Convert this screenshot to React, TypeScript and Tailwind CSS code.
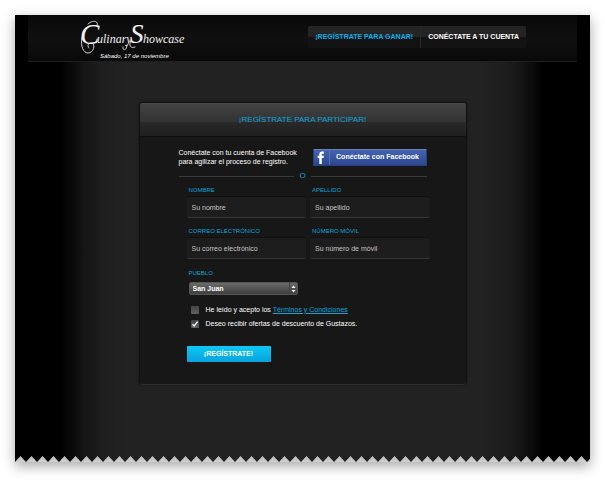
import React from 'react';

type FieldProps = { id: string; label: string; placeholder: string; type?: string };

function Field({ id, label, placeholder, type = 'text' }: FieldProps) {
  return (
    <div className="flex min-w-0 flex-col">
      <label htmlFor={id} className="pl-[2px] text-[6px] leading-[11px] text-[#0ba5da]">
        {label}
      </label>
      <input
        id={id}
        type={type}
        placeholder={placeholder}
        className="h-[22px] w-full rounded-[2px] border-t border-b border-t-[#101010] border-b-[#353535] bg-[#1d1d1d] px-[5px] text-[7px] text-[#ccc] outline-none placeholder:text-[#c4c4c4] placeholder:opacity-100"
      />
    </div>
  );
}

type CheckProps = { id: string; checked?: boolean; children: React.ReactNode };

function Check({ id, checked = false, children }: CheckProps) {
  return (
    <div className="flex h-[14px] items-center gap-[7px] text-[7px] text-white">
      <span className="grid h-[8px] w-[8px] shrink-0">
        <input
          id={id}
          type="checkbox"
          defaultChecked={checked}
          className="peer col-start-1 row-start-1 h-[8px] w-[8px] appearance-none rounded-[1px] bg-linear-to-b from-[#434343] to-[#626262]"
        />
        <svg
          viewBox="0 0 8 8"
          className="pointer-events-none invisible col-start-1 row-start-1 h-[8px] w-[8px] peer-checked:visible"
          aria-hidden="true"
        >
          <path d="M1.5 4.2 3.2 6 6.6 1.6" fill="none" stroke="#fff" strokeWidth="1.3" />
        </svg>
      </span>
      <label htmlFor={id}>{children}</label>
    </div>
  );
}

function Logo() {
  return (
    <div className="flex w-[108px] flex-col text-white">
      <svg
        viewBox="0 0 108 36"
        className="block h-[36px] w-[108px] font-['Liberation_Serif',serif] italic"
        fill="#f2f2f2"
        role="img"
        aria-label="Culinary Showcase"
      >
        <text x="0" y="25" fontSize="29">C</text>
        <text x="17" y="24" fontSize="12">ulinary</text>
        <text x="50" y="24" fontSize="27">S</text>
        <text x="63" y="24" fontSize="12">howcase</text>
        <g fill="none" stroke="#e8e8e8" strokeWidth="0.9" strokeLinecap="round">
          <path d="M2 18C0 28 4 34 8 34c6 0 8-10 3-10-3 0-4 3-2 5" />
          <path d="M17 7c2-6-5-6-9-2" />
          <path d="M51 22c-3 4 0 8 4 6" />
          <path d="M47 26c0 6-5 6-4 2" />
        </g>
      </svg>
      <p className="-mt-[3px] pl-[20px] text-[6px] leading-[9px] whitespace-nowrap italic">Sábado, 17 de noviembre</p>
    </div>
  );
}

function TornEdge() {
  return (
    <svg className="block h-[6px] w-full" aria-hidden="true">
      <defs>
        <linearGradient id="toothFill" x1="0" y1="0" x2="0" y2="1">
          <stop offset="0" stopColor="#bdbdbd" />
          <stop offset="1" stopColor="#cfcfcf" />
        </linearGradient>
        <pattern id="teeth" width="11" height="6" patternUnits="userSpaceOnUse">
          <path d="M0 6 5.5 0 11 6Z" fill="url(#toothFill)" />
        </pattern>
      </defs>
      <rect width="100%" height="6" fill="url(#teeth)" />
    </svg>
  );
}

export default function App() {
  return (
    <div className="overflow-hidden bg-white p-[15px] pb-[19px] font-['Liberation_Sans',Arial,sans-serif]">
      <div className="flex flex-col bg-[linear-gradient(to_right,#000_8%,#151515_12%,#1e1e1e_15%,#222_20%,#222_80%,#1e1e1e_85%,#151515_88%,#000_92%)] shadow-[0_4px_12px_rgba(0,0,0,0.35)]">
        <header className="mx-[13px] flex h-[47px] items-start justify-between border-b border-[#1f1f1f] bg-linear-to-b from-[#080808] via-[#101010] to-[#090909] pr-[51px] pl-[52px]">
          <div className="pt-[4px]">
            <Logo />
          </div>
          <nav className="mt-[11px] flex h-[22px] items-stretch rounded-[2px] bg-linear-to-b from-[#242424] from-50% to-[#131313] to-50% text-[7px] font-bold whitespace-nowrap">
            <a href="#registro" className="flex items-center border-r border-[#292929] px-[7px] text-[#0bb0ea]">
              ¡REGÍSTRATE PARA GANAR!
            </a>
            <a href="#cuenta" className="flex items-center px-[7px] text-white">
              CONÉCTATE A TU CUENTA
            </a>
          </nav>
        </header>

        <main id="registro" className="px-4 pt-[40px] pb-[71px]">
          <section className="mx-auto max-w-[328px] rounded-[4px] border border-[#111] border-b-[#2c2c2c] bg-[#171717] shadow-[0_0_3px_rgba(0,0,0,0.4)]">
            <h2 className="flex h-[34px] items-center justify-center rounded-t-[2px] border-t border-b border-t-[#4a4a4a] border-b-[#101010] bg-[linear-gradient(#424242,#333_55%,#292929_56%,#1f1f1f)] text-[8px] text-[#0ba5da]">
              ¡REGÍSTRATE PARA PARTICIPAR!
            </h2>

            <div className="flex items-center justify-between pt-[11px] pr-[39px] pl-[39px]">
              <p className="text-[7px] leading-[9px] whitespace-nowrap text-white">
                Conéctate con tu cuenta de Facebook
                <br />
                para agilizar el proceso de registro.
              </p>
              <button
                type="button"
                className="flex h-[17px] w-[114px] items-stretch rounded-[1px] border border-[#283f7c] border-t-[#6680bd] bg-linear-to-b from-[#4564ad] to-[#2c4791] text-white"
              >
                <span className="flex w-[16px] items-center justify-center border-r border-[#5671b4]">
                  <svg viewBox="0 0 8 13" className="h-[13px] w-[8px]" aria-hidden="true">
                    <path
                      d="M2.3 13V7H.7V4.7h1.6V3.3C2.3 1.4 3.4.5 5 .5h1.9v2.2H5.7c-.7 0-.9.3-.9.9v1.1h2.1L6.6 7H4.8v6Z"
                      fill="#fff"
                    />
                  </svg>
                </span>
                <span className="flex flex-1 items-center justify-center text-[7px] font-bold whitespace-nowrap">
                  Conéctate con Facebook
                </span>
              </button>
            </div>

            <div className="mt-[5px] flex h-[10px] items-center gap-[5px] px-[39px] text-[8px] text-[#0ba5da]">
              <span className="h-px flex-1 bg-[#3b3b3b]" />
              <span>O</span>
              <span className="h-px flex-1 bg-[#3b3b3b]" />
            </div>

            <form className="pt-[4px] pr-[36px] pb-[22px] pl-[47px]" onSubmit={(e) => e.preventDefault()}>
              <div className="grid grid-cols-2 gap-x-[4px] gap-y-[8px]">
                <Field id="nombre" label="NOMBRE" placeholder="Su nombre" />
                <Field id="apellido" label="APELLIDO" placeholder="Su apellido" />
                <Field id="correo" label="CORREO ELECTRÓNICO" placeholder="Su correo electrónico" type="email" />
                <Field id="movil" label="NÚMERO MÓVIL" placeholder="Su número de móvil" type="tel" />
              </div>

              <div className="mt-[9px] flex flex-col gap-[3px] pl-[2px]">
                <label htmlFor="pueblo" className="text-[6px] leading-[11px] text-[#0ba5da]">
                  PUEBLO
                </label>
                <div className="grid w-[109px]">
                  <select
                    id="pueblo"
                    defaultValue="San Juan"
                    className="col-start-1 row-start-1 h-[13px] w-full appearance-none rounded-[2px] border border-[#555] bg-linear-to-b from-[#6a6a6a] to-[#3f3f3f] px-[3px] text-[7px] leading-[11px] font-bold text-white"
                  >
                    <option>San Juan</option>
                  </select>
                  <span className="pointer-events-none col-start-1 row-start-1 flex w-[9px] items-center justify-center justify-self-end border-l border-[#444]">
                    <svg viewBox="0 0 5 8" className="h-[8px] w-[5px]" aria-hidden="true">
                      <path d="M.5 3 2.5.6 4.5 3ZM.5 5 2.5 7.4 4.5 5Z" fill="#fff" />
                    </svg>
                  </span>
                </div>
              </div>

              <div className="mt-[8px] flex flex-col pl-[4px]">
                <Check id="terminos">
                  He leído y acepto los{' '}
                  <a href="#terminos" className="text-[#0ba5da] underline">
                    Términos y Condiciones
                  </a>
                </Check>
                <Check id="ofertas" checked>
                  Deseo recibir ofertas de descuento de Gustazos.
                </Check>
              </div>

              <button
                type="submit"
                className="mt-[15px] block h-[16px] w-[84px] rounded-[1px] bg-linear-to-b from-[#0dc8f5] to-[#08a3dc] text-[7px] font-bold text-white"
              >
                ¡REGÍSTRATE!
              </button>
            </form>
          </section>
        </main>
        <TornEdge />
      </div>
    </div>
  );
}
